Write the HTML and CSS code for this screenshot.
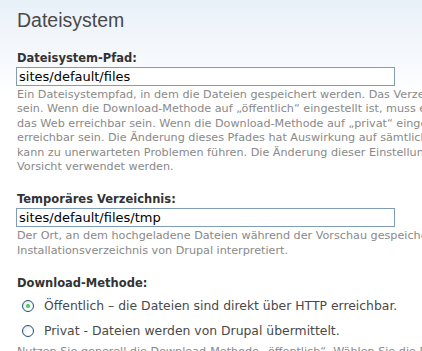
FILE: index.html
```html
<!DOCTYPE html>
<html lang="de">
<head>
<meta charset="utf-8">
<title>Dateisystem</title>
<link rel="stylesheet" href="styles.css">
</head>
<body>
<div class="page">
  <h2 class="title">Dateisystem</h2>
  <div class="form-item">
    <label class="label">Dateisystem-Pfad:</label>
    <div class="input"><span>sites/default/files</span></div>
    <div class="description">
      <span class="line">Ein Dateisystempfad, in dem die Dateien gespeichert werden. Das Verzeichnis muss existieren und von Drupal beschreibbar</span>
      <span class="line">sein. Wenn die Download-Methode auf „öffentlich“ eingestellt ist, muss es zudem über</span>
      <span class="line">das Web erreichbar sein. Wenn die Download-Methode auf „privat“ eingestellt ist, sollte es nicht über das Web</span>
      <span class="line">erreichbar sein. Die Änderung dieses Pfades hat Auswirkung auf sämtliche Dateipfade und</span>
      <span class="line">kann zu unerwarteten Problemen führen. Die Änderung dieser Einstellung sollte daher mit</span>
      <span class="line">Vorsicht verwendet werden.</span>
    </div>
  </div>
  <div class="form-item">
    <label class="label">Temporäres Verzeichnis:</label>
    <div class="input"><span>sites/default/files/tmp</span></div>
    <div class="description">
      <span class="line">Der Ort, an dem hochgeladene Dateien während der Vorschau gespeichert werden. Relative Pfade werden vom</span>
      <span class="line">Installationsverzeichnis von Drupal interpretiert.</span>
    </div>
  </div>
  <div class="form-item">
    <label class="label">Download-Methode:</label>
    <div class="radios">
      <div class="radio"><span class="dot checked"></span><span>Öffentlich – die Dateien sind direkt über HTTP erreichbar.</span></div>
      <div class="radio"><span class="dot"></span><span>Privat - Dateien werden von Drupal übermittelt.</span></div>
    </div>
    <div class="description">
      <span class="line">Nutzen Sie generell die Download-Methode „öffentlich“. Wählen Sie die Privat-Methode nur, wenn Sie den Zugriff kontrollieren möchten.</span>
    </div>
  </div>
</div>
</body>
</html>
```
FILE: styles.css
```css
html, body {
  margin: 0;
  padding: 0;
}
body {
  background: linear-gradient(#e8f0f8 0, #ffffff 95px) no-repeat;
  background-color: #fff;
  font-family: "DejaVu Sans", Verdana, sans-serif;
  color: #494949;
  width: 422px;
  height: 351px;
  overflow: hidden;
}
.page {
  padding: 8px 0 0 17px;
  white-space: nowrap;
}
.title {
  margin: 0 0 19px 0;
  font-family: "Liberation Sans", Arial, sans-serif;
  font-weight: normal;
  font-size: 19.5px;
  line-height: 24px;
  color: #494949;
}
.form-item {
  margin-bottom: 18px;
}
.label {
  display: block;
  font-weight: bold;
  font-size: 11.5px;
  line-height: 14px;
  margin-bottom: 2px;
  color: #333;
}
.input {
  box-sizing: border-box;
  width: 379px;
  height: 19px;
  margin-left: -1px;
  border: 1px solid #7f9db9;
  background: #fff;
  font-size: 13px;
  line-height: 17px;
  padding-left: 2px;
  color: #000;
}
.description {
  font-size: 11.2px;
  line-height: 14.4px;
  color: #898989;
  margin-top: 2px;
}
.line {
  display: block;
}
.radios {
  padding: 1px 0 0 5px;
}
.radio {
  display: flex;
  align-items: center;
  gap: 10px;
  height: 25px;
  font-size: 12.4px;
  color: #494949;
}
.dot {
  box-sizing: border-box;
  width: 12px;
  height: 12px;
  border-radius: 50%;
  border: 1px solid #1c5180;
  background: radial-gradient(circle at 65% 65%, #ffffff 30%, #dcdcd5 100%);
  position: relative;
  flex: none;
}
.dot.checked::after {
  content: "";
  position: absolute;
  left: 3px;
  top: 3px;
  width: 4px;
  height: 4px;
  border-radius: 50%;
  background: radial-gradient(circle, #6ce06c 0, #21a121 100%);
}
```
